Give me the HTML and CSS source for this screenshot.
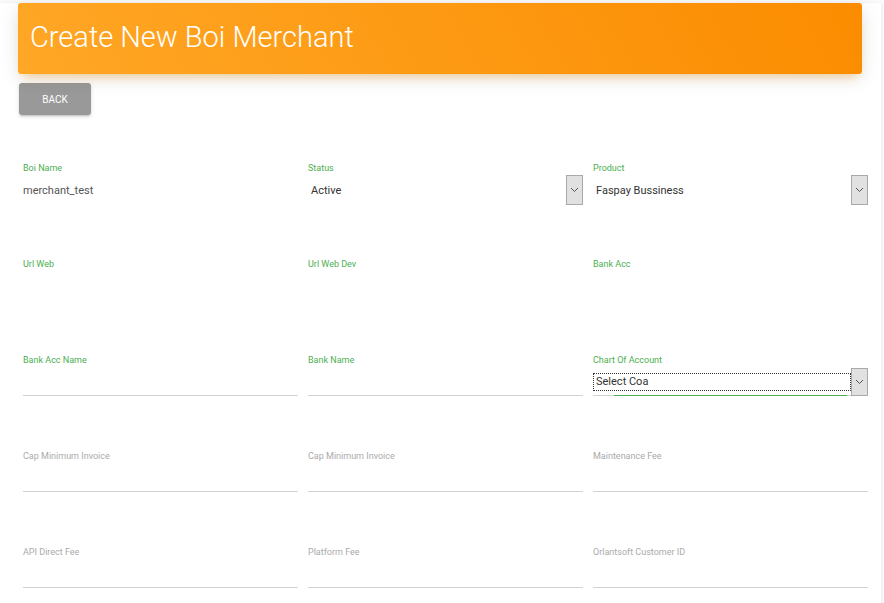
FILE: index.html
```html
<!DOCTYPE html>
<html>
<head>
<meta charset="utf-8">
<link rel="stylesheet" href="styles.css">
</head>
<body>
<div class="card">
  <div class="card-header">
    <h4 class="title">Create New Boi Merchant</h4>
  </div>
  <div class="card-body">
    <button class="btn-back">BACK</button>
    <div class="form-grid">
      <div class="field">
        <label class="lbl lbl-green">Boi Name</label>
        <div class="ctrl ctrl-plain"><span class="val">merchant_test</span></div>
      </div>
      <div class="field">
        <label class="lbl lbl-green">Status</label>
        <div class="ctrl ctrl-select"><span class="val val-sel">Active</span><span class="sel-btn"><svg width="9" height="6" viewBox="0 0 9 6"><path d="M1 1l3.5 3.5L8 1" fill="none" stroke="#555" stroke-width="1"/></svg></span></div>
      </div>
      <div class="field">
        <label class="lbl lbl-green">Product</label>
        <div class="ctrl ctrl-select"><span class="val val-sel">Faspay Bussiness</span><span class="sel-btn"><svg width="9" height="6" viewBox="0 0 9 6"><path d="M1 1l3.5 3.5L8 1" fill="none" stroke="#555" stroke-width="1"/></svg></span></div>
      </div>

      <div class="field">
        <label class="lbl lbl-green">Url Web</label>
        <div class="ctrl ctrl-plain"></div>
      </div>
      <div class="field">
        <label class="lbl lbl-green">Url Web Dev</label>
        <div class="ctrl ctrl-plain"></div>
      </div>
      <div class="field">
        <label class="lbl lbl-green">Bank Acc</label>
        <div class="ctrl ctrl-plain"></div>
      </div>

      <div class="field">
        <label class="lbl lbl-green">Bank Acc Name</label>
        <div class="ctrl ctrl-line"></div>
      </div>
      <div class="field">
        <label class="lbl lbl-green">Bank Name</label>
        <div class="ctrl ctrl-line"></div>
      </div>
      <div class="field">
        <label class="lbl lbl-green">Chart Of Account</label>
        <div class="ctrl ctrl-line ctrl-coa"><span class="coa-box">Select Coa</span><span class="coa-focus"></span><span class="sel-btn sel-btn-coa"><svg width="9" height="6" viewBox="0 0 9 6"><path d="M1 1l3.5 3.5L8 1" fill="none" stroke="#555" stroke-width="1"/></svg></span></div>
      </div>

      <div class="field">
        <label class="lbl">Cap Minimum Invoice</label>
        <div class="ctrl ctrl-line"></div>
      </div>
      <div class="field">
        <label class="lbl">Cap Minimum Invoice</label>
        <div class="ctrl ctrl-line"></div>
      </div>
      <div class="field">
        <label class="lbl">Maintenance Fee</label>
        <div class="ctrl ctrl-line"></div>
      </div>

      <div class="field">
        <label class="lbl">API Direct Fee</label>
        <div class="ctrl ctrl-line"></div>
      </div>
      <div class="field">
        <label class="lbl">Platform Fee</label>
        <div class="ctrl ctrl-line"></div>
      </div>
      <div class="field">
        <label class="lbl">Orlantsoft Customer ID</label>
        <div class="ctrl ctrl-line"></div>
      </div>
    </div>
  </div>
</div>
</body>
</html>
```
FILE: styles.css
```css
html, body {
  margin: 0;
  padding: 0;
}
body {
  background: #fbfbfb;
  font-family: Roboto, "Liberation Sans", sans-serif;
  overflow: hidden;
}
.card {
  margin: 10px 3px 0 -4px;
  background: #fff;
  border-radius: 3px;
  box-shadow: 0 1px 4px 0 rgba(0,0,0,0.10);
  height: 620px;
  padding-left: 4px;
}
.card-header {
  margin: -7px 19px 0 18px;
  height: 71px;
  border-radius: 3px;
  background: linear-gradient(60deg, #ffa726, #fb8c00);
  box-shadow: 0 4px 20px 0 rgba(0,0,0,0.10), 0 7px 10px -5px rgba(255,152,0,0.4);
  display: flex;
  align-items: center;
  padding-left: 12px;
  box-sizing: border-box;
  position: relative;
}
.title {
  margin: 0;
  color: #fff;
  font-family: Roboto, sans-serif;
  font-weight: 300;
  font-size: 29px;
  line-height: 1;
  position: relative;
  top: -1px;
}
.card-body {
  padding: 9px 0 0 19px;
}
.btn-back {
  display: block;
  width: 72px;
  height: 32px;
  border: 0;
  border-radius: 3px;
  background: #999;
  color: #fff;
  font-family: Roboto, sans-serif;
  font-size: 10px;
  font-weight: 400;
  padding: 0;
  box-shadow: 0 2px 2px 0 rgba(153,153,153,0.24), 0 3px 1px -2px rgba(153,153,153,0.3), 0 1px 5px 0 rgba(153,153,153,0.22);
}
.form-grid {
  margin: 47px 0 0 4px;
  display: grid;
  grid-template-columns: 275px 275px 275px;
  column-gap: 10px;
  grid-auto-rows: 96px;
}
.field {
  display: flex;
  flex-direction: column;
}
.lbl {
  display: block;
  height: 12px;
  line-height: 12px;
  font-size: 9px;
  color: #aaaaaa;
}
.lbl-green {
  color: #4caf50;
}
.ctrl {
  height: 28px;
  margin-top: 2px;
  position: relative;
  display: flex;
  align-items: center;
  box-sizing: border-box;
}
.ctrl-line {
  border-bottom: 1px solid #d2d2d2;
}
.val {
  font-size: 11px;
  color: #555;
  position: relative;
  top: 0;
}
.val-sel {
  padding-left: 3px;
  color: #333;
}
.sel-btn {
  position: absolute;
  right: 0;
  top: -1px;
  width: 17px;
  height: 30px;
  box-sizing: border-box;
  background: #e1e1e1;
  border: 1px solid #a9a9a9;
  display: flex;
  align-items: center;
  justify-content: center;
}
.sel-btn-coa {
  top: 0;
  height: 28px;
}
.coa-box {
  position: absolute;
  left: 0;
  top: 5px;
  width: 258px;
  height: 18px;
  box-sizing: border-box;
  border: 1px dotted #333;
  font-size: 11px;
  color: #333;
  line-height: 16px;
  padding-left: 2px;
}
.coa-focus {
  position: absolute;
  left: 21px;
  bottom: -1px;
  width: 233px;
  height: 1px;
  background: #4caf50;
}
```
